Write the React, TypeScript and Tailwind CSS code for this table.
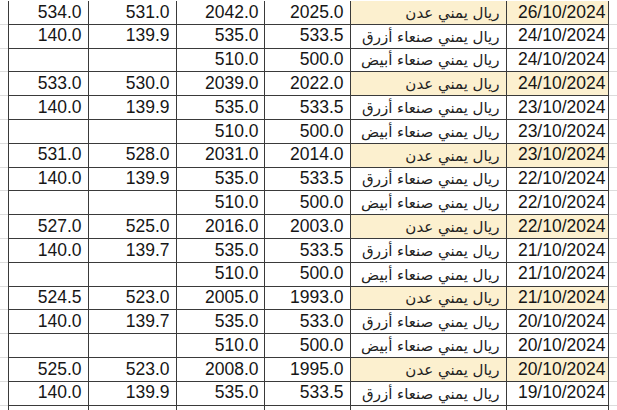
type Kind = 'aden' | 'blue' | 'white';

interface Row {
  a: string;
  b: string;
  c: string;
  d: string;
  kind: Kind;
  date: string;
}

const labels: Record<Kind, string> = {
  aden: 'ريال يمني عدن',
  blue: 'ريال يمني صنعاء أزرق',
  white: 'ريال يمني صنعاء أبيض',
};

const rows: Row[] = [
  { a: '534.0', b: '531.0', c: '2042.0', d: '2025.0', kind: 'aden', date: '26/10/2024' },
  { a: '140.0', b: '139.9', c: '535.0', d: '533.5', kind: 'blue', date: '24/10/2024' },
  { a: '', b: '', c: '510.0', d: '500.0', kind: 'white', date: '24/10/2024' },
  { a: '533.0', b: '530.0', c: '2039.0', d: '2022.0', kind: 'aden', date: '24/10/2024' },
  { a: '140.0', b: '139.9', c: '535.0', d: '533.5', kind: 'blue', date: '23/10/2024' },
  { a: '', b: '', c: '510.0', d: '500.0', kind: 'white', date: '23/10/2024' },
  { a: '531.0', b: '528.0', c: '2031.0', d: '2014.0', kind: 'aden', date: '23/10/2024' },
  { a: '140.0', b: '139.9', c: '535.0', d: '533.5', kind: 'blue', date: '22/10/2024' },
  { a: '', b: '', c: '510.0', d: '500.0', kind: 'white', date: '22/10/2024' },
  { a: '527.0', b: '525.0', c: '2016.0', d: '2003.0', kind: 'aden', date: '22/10/2024' },
  { a: '140.0', b: '139.7', c: '535.0', d: '533.5', kind: 'blue', date: '21/10/2024' },
  { a: '', b: '', c: '510.0', d: '500.0', kind: 'white', date: '21/10/2024' },
  { a: '524.5', b: '523.0', c: '2005.0', d: '1993.0', kind: 'aden', date: '21/10/2024' },
  { a: '140.0', b: '139.7', c: '535.0', d: '533.0', kind: 'blue', date: '20/10/2024' },
  { a: '', b: '', c: '510.0', d: '500.0', kind: 'white', date: '20/10/2024' },
  { a: '525.0', b: '523.0', c: '2008.0', d: '1995.0', kind: 'aden', date: '20/10/2024' },
  { a: '140.0', b: '139.9', c: '535.0', d: '533.5', kind: 'blue', date: '19/10/2024' },
];

const cell = 'h-full flex items-center justify-end border-r-[1.5px] border-b-[1.5px] border-[#3a3a3a] overflow-hidden whitespace-nowrap';

function TableRow({ r }: { r: Row }) {
  const hi = r.kind === 'aden' ? 'bg-[#fcf0cf]' : 'bg-white';
  return (
    <div className="flex h-[23.8px] text-[17.5px] leading-none">
      <div className="w-[8px] h-full border-b border-[#dcdcdc]" />
      <div className={`w-[80.5px] pr-[6px] border-l-[1.5px] ${cell}`}>{r.a}</div>
      <div className={`w-[88px] pr-[6px] ${cell}`}>{r.b}</div>
      <div className={`w-[88px] pr-[5px] ${cell}`}>{r.c}</div>
      <div className={`w-[86px] pr-[6px] ${cell}`}>{r.d}</div>
      <div
        dir="rtl"
        className={`w-[156px] !justify-start pr-[6px] pt-[2px] text-[15px] text-[#222] ${hi} ${cell}`}
        style={{ fontFamily: '"DejaVu Sans", sans-serif' }}
      >
        {labels[r.kind]}
      </div>
      <div className={`w-[102px] pr-[2px] ${hi} ${cell}`}>{r.date}</div>
      <div className="flex-1 h-full border-b border-[#dcdcdc]" />
    </div>
  );
}

export default function App() {
  return (
    <div
      className="w-[617px] h-[410px] overflow-hidden bg-white text-[#161616] pt-px"
      style={{ fontFamily: '"Liberation Sans", Arial, "DejaVu Sans", sans-serif' }}
    >
      <div className="flex flex-col">
        {rows.map((r, i) => (
          <TableRow key={i} r={r} />
        ))}
        {/* next row, cut off by the bottom edge */}
        <div className="flex h-[23.8px]">
          <div className="w-[8px] h-full border-b border-[#dcdcdc]" />
          <div className={`w-[80.5px] border-l-[1.5px] ${cell}`} />
          <div className={`w-[88px] ${cell}`} />
          <div className={`w-[88px] ${cell}`} />
          <div className={`w-[86px] ${cell}`} />
          <div className={`w-[156px] ${cell}`} />
          <div className={`w-[102px] ${cell}`} />
          <div className="flex-1 h-full border-b border-[#dcdcdc]" />
        </div>
      </div>
    </div>
  );
}
